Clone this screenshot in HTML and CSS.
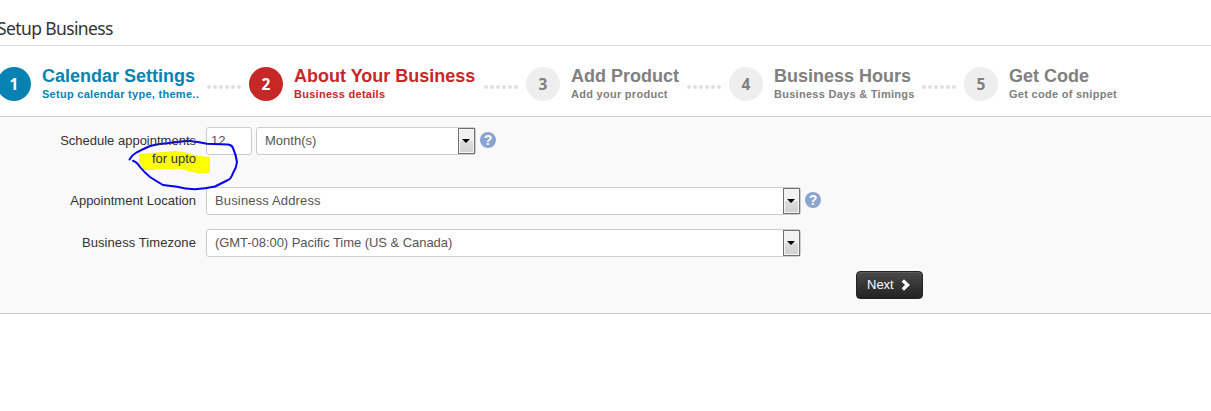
FILE: index.html
```html
<!DOCTYPE html>
<html lang="en">
<head>
  <meta charset="UTF-8">
  <title>Setup Business</title>
  <link rel="stylesheet" href="styles.css">
</head>
<body>
  <h1>Setup Business</h1>

  <ol class="steps">
    <li class="step done calendar">
      <span class="num">1</span>
      <div class="text"><h2>Calendar Settings</h2><p>Setup calendar type, theme..</p></div>
      <div class="dots"><i></i><i></i><i></i><i></i><i></i><i></i></div>
    </li>
    <li class="step active about">
      <span class="num">2</span>
      <div class="text"><h2>About Your Business</h2><p>Business details</p></div>
      <div class="dots"><i></i><i></i><i></i><i></i><i></i><i></i></div>
    </li>
    <li class="step product">
      <span class="num">3</span>
      <div class="text"><h2>Add Product</h2><p>Add your product</p></div>
      <div class="dots"><i></i><i></i><i></i><i></i><i></i><i></i></div>
    </li>
    <li class="step hours">
      <span class="num">4</span>
      <div class="text"><h2>Business Hours</h2><p>Business Days &amp; Timings</p></div>
      <div class="dots"><i></i><i></i><i></i><i></i><i></i><i></i></div>
    </li>
    <li class="step code">
      <span class="num">5</span>
      <div class="text"><h2>Get Code</h2><p>Get code of snippet</p></div>
    </li>
  </ol>

  <form class="panel" onsubmit="return false">
    <div class="row schedule">
      <label for="period">Schedule appointments <span>for upto</span></label>
      <input id="period" class="box period" value="12">
      <div class="box select unit"><span>Month(s)</span><b class="arrow"></b></div>
      <span class="help">?</span>
    </div>
    <div class="row location">
      <label>Appointment Location</label>
      <div class="box select wide address"><span>Business Address</span><b class="arrow"></b></div>
      <span class="help">?</span>
    </div>
    <div class="row timezone">
      <label>Business Timezone</label>
      <div class="box select wide"><span>(GMT-08:00) Pacific Time (US &amp; Canada)</span><b class="arrow"></b></div>
    </div>
    <button class="next">Next
      <svg width="10" height="12" viewBox="0 0 10 12"><path d="M1.800 1.500 6.500 6 1.800 10.500" fill="none" stroke="#fff" stroke-width="3.400"/></svg>
    </button>

    <!-- highlighter and pen marks over the first row -->
    <svg class="marks" width="120" height="60" viewBox="125 135 120 60">
      <path class="highlight" d="M139 154 150 153 165 152 175 151 184 152 190 154 200 156 210 157V173H197L188 171 181 169H157L154 170H142L141 164 139 163Z"/>
      <path class="pen" d="M129.500 159.500Q132 155 136.500 152.500T150 146Q158 144 167 143.300L188 140.700Q198 141.500 207 143.700L228 144.500Q232 145 233 148 236 155 237 162 236.500 168 233 173 231 179 228 180 222 183 215 186.500 205 188.500 195 189.300 185 189 177 186.700L163 185Q156 181 150 177 144 172 140 167 137 162 133 160.700"/>
    </svg>
  </form>
</body>
</html>
```

FILE: styles.css
```css
* {
  box-sizing: border-box;
}

body {
  margin: 0;
  background: white;
  color: #333;
  font: 13px/18px "Liberation Sans", Arial, sans-serif;
  overflow: hidden;
}

h1, h2, p, ol {
  margin: 0;
  padding: 0;
}

h1 {
  height: 46px;
  margin-left: -3px;
  padding-top: 10px;
  border-bottom: 1px solid #ddd;
  font: 17.5px/36px "Noto Sans", "Open Sans", sans-serif;
  letter-spacing: -0.62px;
}

.steps {
  display: flex;
  height: 70px;
  margin-left: -3px;
  padding-top: 21px;
  list-style: none;
  color: #808080;
}

.step {
  display: flex;
  flex: none;
}

.calendar { width: 252px; }
.about { width: 277px; }
.product { width: 203px; }
.hours { width: 235px; }

.num {
  flex: none;
  width: 34px;
  height: 34px;
  margin-right: 11px;
  border-radius: 50%;
  background: #eee;
  font: bold 15.5px/34px "Open Sans", sans-serif;
  text-align: center;
}

.text {
  white-space: nowrap;
}

.step h2 {
  font-size: 18px;
  line-height: 18px;
}

.step p {
  font-size: 11px;
  font-weight: bold;
  line-height: 18px;
  letter-spacing: 0.28px;
}

.done { color: #0782b3; }
.active { color: #c62828; }
.done .num { background: #0782b3; color: white; }
.active .num { background: #c62828; color: white; }

.dots {
  display: flex;
  gap: 2px;
  margin: 18px 8px 0 auto;
}

.dots i {
  width: 4px;
  height: 4px;
  border-radius: 50%;
  background: #e0e0e0;
}

.panel {
  position: relative;
  height: 198px;
  padding: 10px 0 0;
  border: solid #ccc;
  border-width: 1px 0;
  background: #f9f9f9;
}

.row {
  display: flex;
  height: 42px;
}

.schedule {
  height: 60px;
}

label {
  width: 196px;
  margin-right: 10px;
  padding: 5px 0 0 50px;
  text-align: right;
  position: relative;
  z-index: 2;
}

.timezone label {
  letter-spacing: 0.08px;
}

.box {
  height: 28px;
  border: 1px solid #ccc;
  border-radius: 3px;
  background: white;
  color: #555;
  font: 13px/26px "Liberation Sans", Arial, sans-serif;
}

.period {
  width: 46px;
  margin-right: 4px;
  padding: 0 4px 2px;
}

.select {
  display: flex;
  justify-content: space-between;
  padding-left: 8px;
}

.unit { width: 220px; }
.wide { width: 595px; }
.address { letter-spacing: 0.15px; }
.timezone .box { letter-spacing: -0.05px; }

.arrow {
  display: flex;
  align-items: center;
  justify-content: center;
  width: 17px;
  padding-right: 1px;
  border: 1px solid #707070;
  background: linear-gradient(#f2f2f2 0 50%, #ddd 50%, #cfcfcf);
  box-shadow: inset 0 0 0 1px #f5f5f5;
}

.arrow::after {
  content: "";
  border: solid transparent;
  border-width: 4px 4px 0;
  border-top-color: black;
}

.help {
  width: 16px;
  height: 16px;
  margin: 5px 0 0 4px;
  border-radius: 50%;
  background: #89a4d0;
  color: white;
  font-size: 14px;
  font-weight: bold;
  line-height: 16px;
  text-align: center;
}

.next {
  display: flex;
  align-items: center;
  gap: 7px;
  width: 67px;
  height: 28px;
  margin-left: 856px;
  padding: 0 0 1px 10px;
  border: 1px solid #222;
  border-radius: 4px;
  background: linear-gradient(#4a4a4a, #222);
  box-shadow: inset 0 1px 0 #5c5c5c;
  color: white;
  font: 13px "Liberation Sans", Arial, sans-serif;
}

.marks {
  position: absolute;
  left: 125px;
  top: 18px;
  z-index: 1;
}

.highlight {
  fill: #fbff00;
}

.pen {
  fill: none;
  stroke: #0500f5;
  stroke-width: 2;
  stroke-linejoin: round;
  stroke-linecap: round;
}
```
